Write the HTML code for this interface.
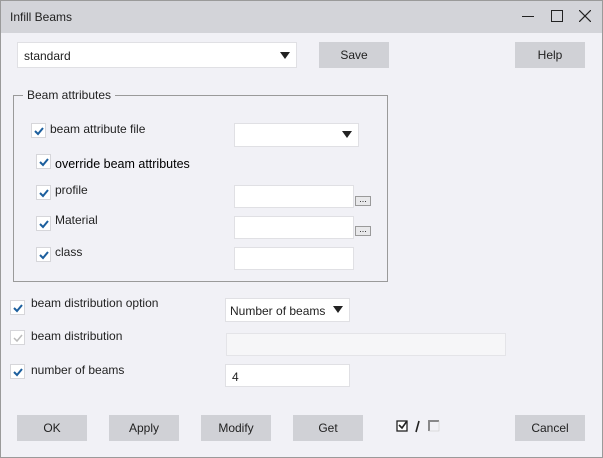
<!DOCTYPE html>
<html><head><meta charset="utf-8"><style>
*{box-sizing:border-box;margin:0;padding:0}
body{width:603px;height:458px;background:#f1f1f6;font-family:"Liberation Sans",sans-serif;font-size:12px;color:#222;position:relative;overflow:hidden}
.frame{position:absolute;left:0;top:0;width:603px;height:458px;border:1px solid #9a9a9a;pointer-events:none}
.tb{position:absolute;left:0;top:0;width:603px;height:33px;background:#d3d4d9}
.a{position:absolute}
.box{position:absolute;background:#fff;border:1px solid #e0e0e4}
.btn{position:absolute;background:#d0d1d6;text-align:center;line-height:26px;font-size:12px;color:#222;height:26px}
.cb{position:absolute;width:15px;height:15px;background:#fff;border:1px solid #d6d6da}
.cb svg{position:absolute;left:1px;top:2px}
.tri{position:absolute;width:0;height:0;border-left:5px solid transparent;border-right:5px solid transparent;border-top:7px solid #222}
.dots{position:absolute;width:16px;height:10px;background:#e8e8ea;border:1px solid #9a9a9a;font-size:9px;line-height:4px;text-align:center}
</style></head><body>
<div class="tb"></div>
<div class="a" style="left:10px;top:10px;font-size:12px">Infill Beams</div>
<div class="a" style="left:522px;top:16px;width:12px;height:1px;background:#222"></div>
<div class="a" style="left:551px;top:10px;width:12px;height:12px;border:1px solid #222"></div>
<svg class="a" style="left:579px;top:10px" width="12" height="12"><path d="M0 0L12 12M12 0L0 12" stroke="#222" stroke-width="1.2"/></svg>

<div class="box" style="left:17px;top:42px;width:280px;height:26px"></div>
<div class="a" style="left:24px;top:49px">standard</div>
<div class="tri" style="left:280px;top:52px"></div>
<div class="btn" style="left:319px;top:42px;width:70px">Save</div>
<div class="btn" style="left:515px;top:42px;width:70px">Help</div>

<div class="a" style="left:13px;top:95px;width:375px;height:187px;border:1px solid #9a9a9a"></div>
<div class="a" style="left:23px;top:88px;background:#f1f1f6;padding:0 4px">Beam attributes</div>

<div class="cb" style="left:31px;top:123px"><svg width="12" height="10"><path d="M2 5L5 8L10 2" stroke="#1c5f9e" stroke-width="2" fill="none"/></svg></div>
<div class="a" style="left:50px;top:122px">beam attribute file</div>
<div class="box" style="left:234px;top:123px;width:125px;height:24px"></div>
<div class="tri" style="left:342px;top:131px"></div>

<div class="cb" style="left:36px;top:154px"><svg width="12" height="10"><path d="M2 5L5 8L10 2" stroke="#1c5f9e" stroke-width="2" fill="none"/></svg></div>
<div class="a" style="left:55px;top:157px;color:#000;font-size:12.5px">override beam attributes</div>

<div class="cb" style="left:36px;top:185px"><svg width="12" height="10"><path d="M2 5L5 8L10 2" stroke="#1c5f9e" stroke-width="2" fill="none"/></svg></div>
<div class="a" style="left:55px;top:183px">profile</div>
<div class="box" style="left:234px;top:185px;width:120px;height:23px"></div>
<div class="dots" style="left:355px;top:196px">...</div>

<div class="cb" style="left:36px;top:216px"><svg width="12" height="10"><path d="M2 5L5 8L10 2" stroke="#1c5f9e" stroke-width="2" fill="none"/></svg></div>
<div class="a" style="left:55px;top:213px">Material</div>
<div class="box" style="left:234px;top:216px;width:120px;height:23px"></div>
<div class="dots" style="left:355px;top:226px">...</div>

<div class="cb" style="left:36px;top:247px"><svg width="12" height="10"><path d="M2 5L5 8L10 2" stroke="#1c5f9e" stroke-width="2" fill="none"/></svg></div>
<div class="a" style="left:55px;top:245px">class</div>
<div class="box" style="left:234px;top:247px;width:120px;height:23px"></div>

<div class="cb" style="left:10px;top:300px"><svg width="12" height="10"><path d="M2 5L5 8L10 2" stroke="#1c5f9e" stroke-width="2" fill="none"/></svg></div>
<div class="a" style="left:31px;top:296px">beam distribution option</div>
<div class="box" style="left:225px;top:298px;width:125px;height:24px"></div>
<div class="a" style="left:230px;top:304px">Number of beams</div>
<div class="tri" style="left:333px;top:306px"></div>

<div class="cb" style="left:10px;top:330px"><svg width="12" height="10"><path d="M2 5L5 8L10 2" stroke="#bbb" stroke-width="1.5" fill="none"/></svg></div>
<div class="a" style="left:31px;top:329px">beam distribution</div>
<div class="a" style="left:226px;top:333px;width:280px;height:23px;background:#f6f6f8;border:1px solid #e4e4e8"></div>

<div class="cb" style="left:10px;top:364px"><svg width="12" height="10"><path d="M2 5L5 8L10 2" stroke="#1c5f9e" stroke-width="2" fill="none"/></svg></div>
<div class="a" style="left:31px;top:363px">number of beams</div>
<div class="box" style="left:225px;top:364px;width:125px;height:23px"></div>
<div class="a" style="left:232px;top:370px">4</div>

<div class="btn" style="left:17px;top:415px;width:70px">OK</div>
<div class="btn" style="left:109px;top:415px;width:70px">Apply</div>
<div class="btn" style="left:201px;top:415px;width:70px">Modify</div>
<div class="btn" style="left:293px;top:415px;width:70px">Get</div>
<div class="btn" style="left:515px;top:415px;width:70px">Cancel</div>
<svg class="a" style="left:396px;top:419px" width="46" height="16"><rect x="1" y="2" width="10" height="10" fill="#fff" stroke="#222" stroke-width="1.3"/><path d="M3 6L6 9L11 2" stroke="#222" stroke-width="1.6" fill="none"/><path d="M20 13L23 2" stroke="#222" stroke-width="1.6"/><path d="M33 12V2H43" stroke="#222" stroke-width="1.5" fill="none"/><rect x="33" y="2" width="10" height="10" fill="none" stroke="#ccc" stroke-width="0.6"/></svg>
<div class="frame"></div>
</body></html>
